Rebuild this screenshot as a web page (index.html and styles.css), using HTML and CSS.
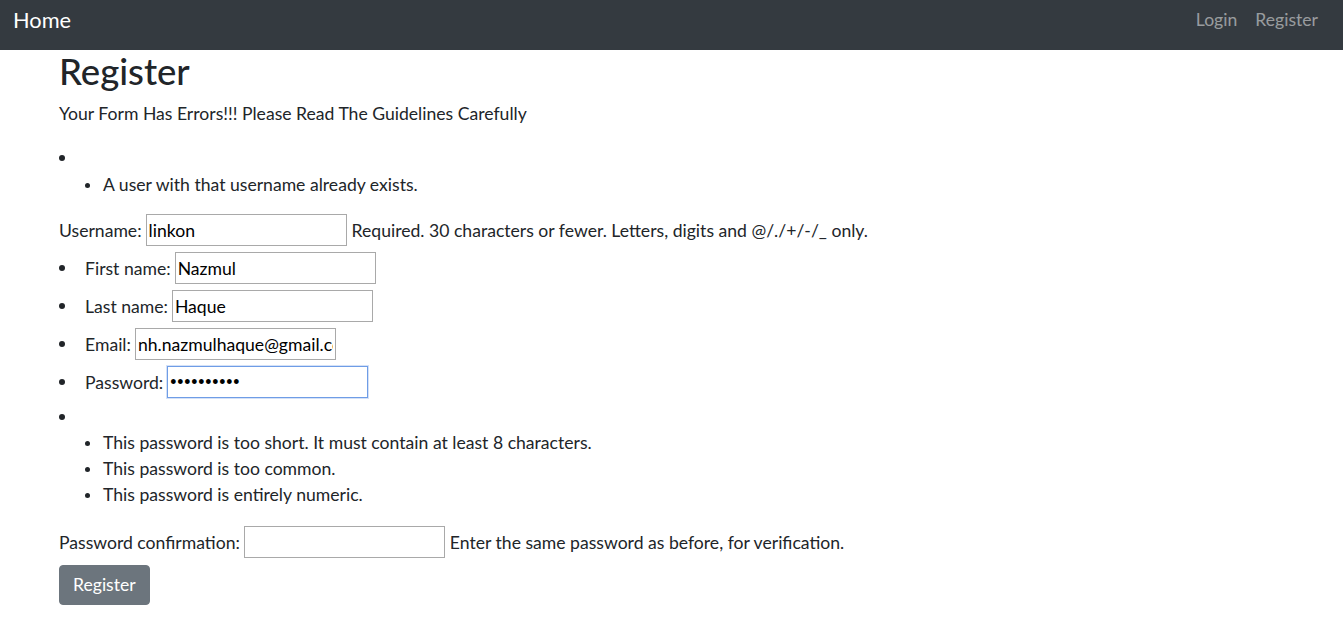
FILE: index.html
```html
<!DOCTYPE html>
<html lang="en">
<head>
<meta charset="utf-8">
<title>Register</title>
<link rel="stylesheet" href="styles.css">
</head>
<body>
<nav class="navbar">
  <a class="brand" href="#">Home</a>
  <div class="nav-links">
    <a class="nav-link" href="#">Login</a>
    <a class="nav-link" href="#">Register</a>
  </div>
</nav>
<main class="content">
  <h1 class="title">Register</h1>
  <p class="intro">Your Form Has Errors!!! Please Read The Guidelines Carefully</p>

  <ul class="list errors">
    <li class="group">
      <ul class="list sublist">
        <li class="item">A user with that username already exists.</li>
      </ul>
    </li>
  </ul>

  <form class="form">
    <div class="row">
      <label class="label" for="id_username">Username:</label>
      <input class="field" type="text" id="id_username" value="linkon">
      <span class="help">Required. 30 characters or fewer. Letters, digits and @/./+/-/_ only.</span>
    </div>
    <ul class="list fields">
      <li class="row bullet-row">
        <label class="label" for="id_first_name">First name:</label>
        <input class="field" type="text" id="id_first_name" value="Nazmul">
      </li>
      <li class="row bullet-row">
        <label class="label" for="id_last_name">Last name:</label>
        <input class="field" type="text" id="id_last_name" value="Haque">
      </li>
      <li class="row bullet-row">
        <label class="label" for="id_email">Email:</label>
        <input class="field" type="email" id="id_email" value="nh.nazmulhaque@gmail.com">
      </li>
      <li class="row bullet-row">
        <label class="label" for="id_password1">Password:</label>
        <input class="field field-focus field-secret" type="password" id="id_password1" value="1234567890" autofocus>
      </li>
      <li class="group">
        <ul class="list sublist">
          <li class="item">This password is too short. It must contain at least 8 characters.</li>
          <li class="item">This password is too common.</li>
          <li class="item">This password is entirely numeric.</li>
        </ul>
      </li>
    </ul>
    <div class="row">
      <label class="label" for="id_password2">Password confirmation:</label>
      <input class="field field-secret" type="password" id="id_password2" value="">
      <span class="help">Enter the same password as before, for verification.</span>
    </div>
    <button class="btn" type="submit">Register</button>
  </form>
</main>
</body>
</html>
```
FILE: styles.css
```css
html, body {
  margin: 0;
  padding: 0;
}
body {
  font-family: "Lato", "Liberation Sans", sans-serif;
  font-size: 17.6px;
  line-height: 26px;
  color: #212529;
  background: #fff;
}
a {
  text-decoration: none;
}
.navbar {
  height: 50px;
  background: #343a40;
  display: flex;
  align-items: flex-start;
  justify-content: space-between;
  padding: 5px 25px 0 13px;
  box-sizing: border-box;
}
.brand {
  color: #fff;
  font-size: 21.8px;
  line-height: 30px;
}
.nav-links {
  display: flex;
  gap: 18px;
  line-height: 30px;
}
.nav-link {
  color: rgba(255, 255, 255, 0.5);
}
.content {
  padding: 0 59px;
}
.title {
  margin: 0 0 7px;
  font-size: 36.5px;
  line-height: 43px;
  font-weight: 500;
}
.intro {
  margin: 0 0 16px;
  padding-top: 1px;
}
.list {
  list-style: none;
  margin: 0;
  padding: 0;
}
.errors {
  margin-bottom: 13px;
}
.fields {
  margin-bottom: 15px;
}
.group {
  padding-top: 12px;
}
.group::before {
  content: "";
  display: block;
  width: 6px;
  height: 6px;
  border-radius: 50%;
  background: #212529;
  margin-bottom: 11px;
}
.fields .group {
  padding-top: 13px;
}
.fields .group::before {
  margin-bottom: 10px;
}
.sublist {
  margin-left: 26px;
}
.item::before {
  content: "";
  display: inline-block;
  width: 5px;
  height: 5px;
  border-radius: 50%;
  background: #212529;
  vertical-align: middle;
  margin: 0 13px 2px 0;
}
.row {
  display: flex;
  align-items: center;
  height: 38px;
}
.bullet-row::before {
  content: "";
  width: 6px;
  height: 6px;
  border-radius: 50%;
  background: #212529;
  margin-right: 20px;
  flex: none;
}
.label {
  margin-right: 4px;
  padding-top: 1px;
}
.help {
  margin-left: 5px;
  padding-top: 1px;
}
.field {
  box-sizing: border-box;
  width: 201px;
  height: 32px;
  margin: 0;
  padding: 1px 2px;
  border: 1px solid #a9a9a9;
  font-family: inherit;
  font-size: inherit;
  line-height: 26px;
  color: #000;
  background: #fff;
}
.field-secret {
  font-family: "Liberation Sans", sans-serif;
  font-size: 17.6px;
  letter-spacing: 0.85px;
}
.field:focus,
.field-focus {
  outline: none;
  border-color: #6f9de6;
  box-shadow: 0 0 0 1px rgba(111, 157, 230, 0.3);
}
.btn {
  margin-top: 4px;
  height: 40px;
  padding: 0 13px;
  background: #6c757d;
  color: #fff;
  border: 1px solid #6c757d;
  border-radius: 4px;
  font-family: inherit;
  font-size: 17.6px;
  line-height: 26px;
}
```
